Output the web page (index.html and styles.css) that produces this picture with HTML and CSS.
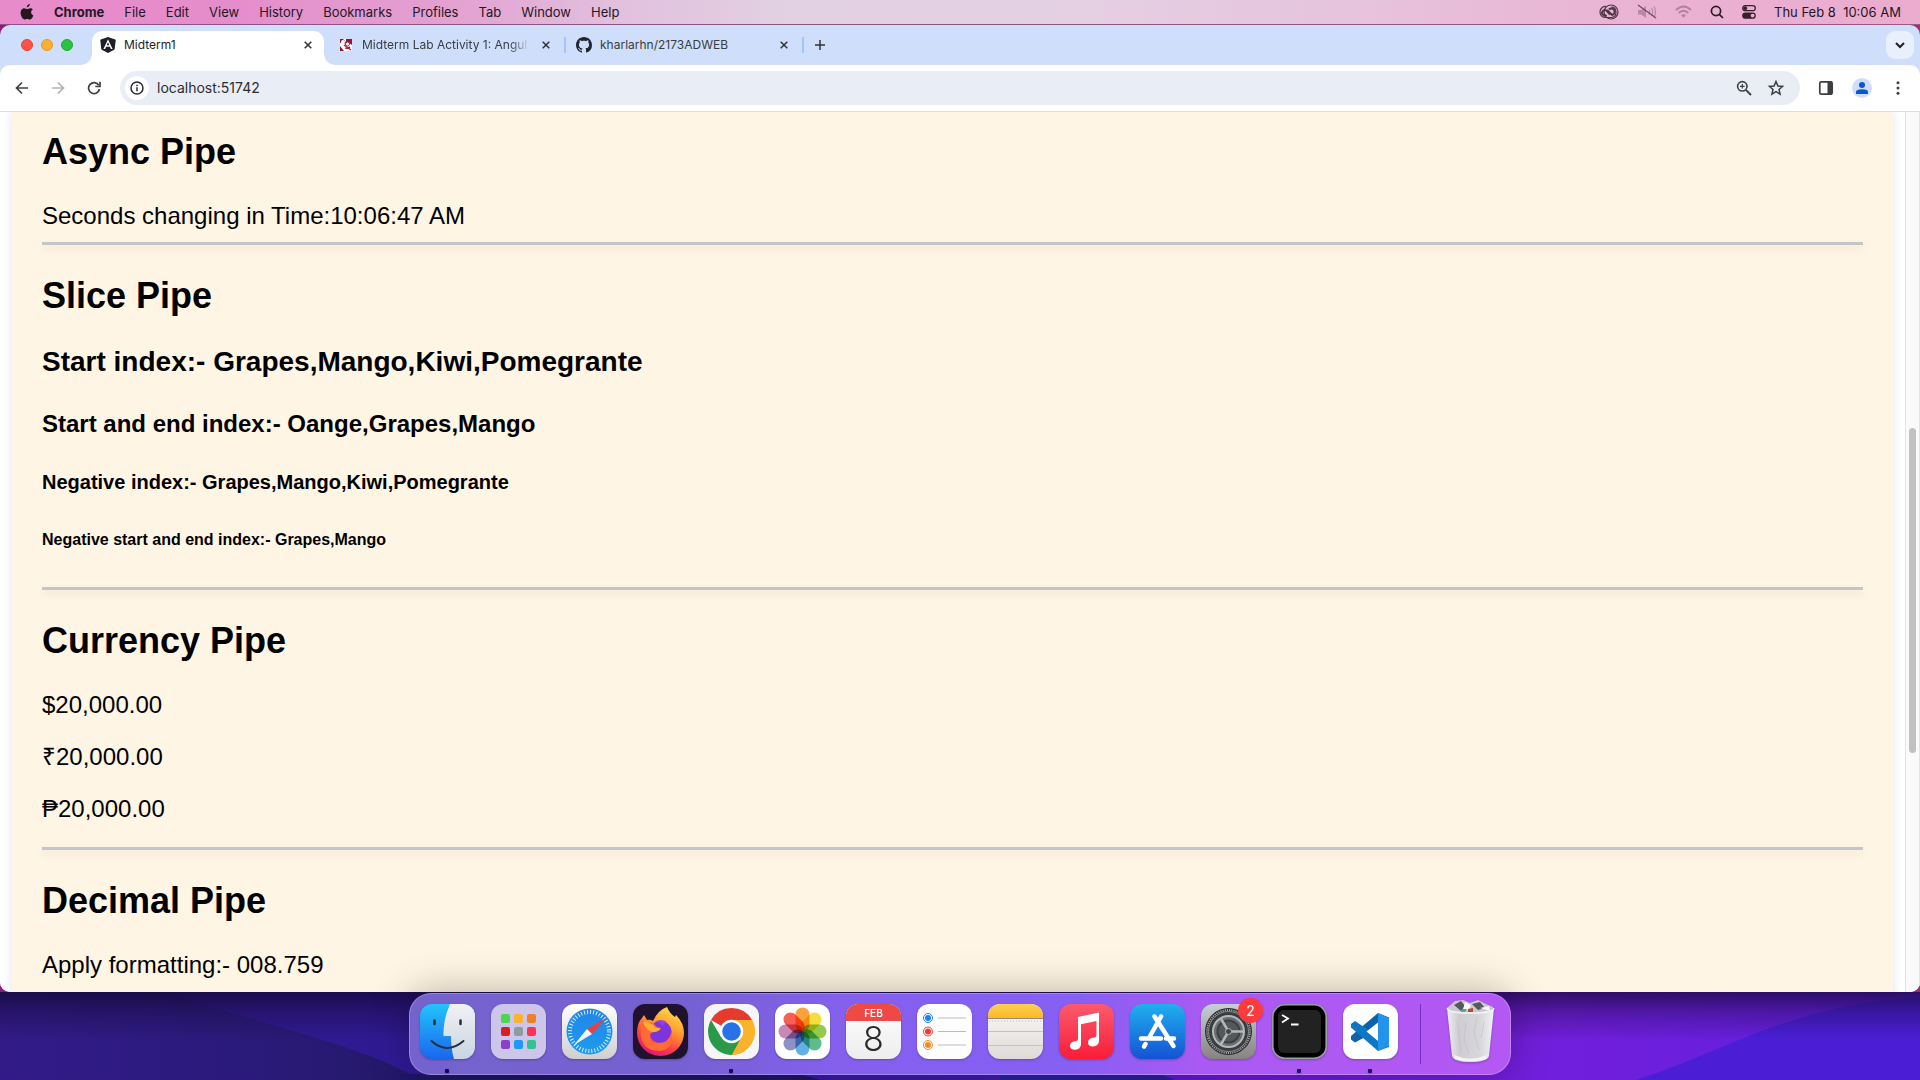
FILE: index.html
```html
<!DOCTYPE html>
<html lang="en">
<head>
<meta charset="utf-8">
<title>Midterm1</title>
<link rel="stylesheet" href="styles.css">
</head>
<body>
<div class="desktop">
  <svg class="wallpaper" viewBox="0 0 1920 88" preserveAspectRatio="none" aria-hidden="true">
    <defs>
      <linearGradient id="wall" x1="0" x2="1" y1="0" y2="0">
        <stop offset="0" stop-color="#321b88"/><stop offset=".2" stop-color="#301a94"/><stop offset=".5" stop-color="#3d19b0"/><stop offset=".65" stop-color="#6a1ad2"/><stop offset=".8" stop-color="#721fdc"/><stop offset="1" stop-color="#601fdc"/>
      </linearGradient>
      <linearGradient id="wave" x1="0" x2="1" y1="0" y2="0">
        <stop offset="0" stop-color="#281a70" stop-opacity="0"/><stop offset=".6" stop-color="#281a70" stop-opacity=".7"/><stop offset="1" stop-color="#221866"/>
      </linearGradient>
    </defs>
    <rect width="1920" height="88" fill="url(#wall)"/>
    <path d="M0 88V0H170C250 32 360 50 420 88Z" fill="url(#wave)"/>
    <path d="M400 88V82H800L820 88Z" fill="#1d1768"/>
    <path d="M1636 88C1730 58 1790 12 1920 6V88Z" fill="#4b1ed6"/>
    <path d="M1000 88V82H1160L1175 88Z" fill="#2b1fa2"/>
  </svg>

  <header class="menubar">
    <nav class="menus" aria-label="Menu bar">
      <button class="menu apple" aria-label="Apple menu"><svg width="14" height="16" viewBox="0 0 14 16"><path d="M9.800 0C9.900 1.600 8.400 3.400 6.800 3.300C6.700 1.700 8.200 .2 9.800 0ZM12.900 5.400C11.700 6.100 11.100 7 11.100 8.300C11.100 9.800 12 10.900 13.300 11.400C12.700 13.200 11.300 15.500 9.900 15.500C8.900 15.500 8.500 14.900 7.200 14.900C6 14.900 5.500 15.500 4.600 15.500C2.700 15.500 .6 11.900 .6 8.800C.6 5.900 2.400 4.300 4.200 4.300C5.400 4.300 6.300 5.100 7.100 5.100C7.800 5.100 8.900 4.200 10.300 4.200C11.300 4.200 12.300 4.700 12.900 5.400Z" fill="#24171f"/></svg></button>
      <button class="menu menu-app">Chrome</button>
      <button class="menu">File</button>
      <button class="menu">Edit</button>
      <button class="menu">View</button>
      <button class="menu">History</button>
      <button class="menu">Bookmarks</button>
      <button class="menu">Profiles</button>
      <button class="menu">Tab</button>
      <button class="menu">Window</button>
      <button class="menu">Help</button>
    </nav>
    <div class="status">
      <svg width="20" height="16" viewBox="0 0 20 16" fill="none" stroke="#4e3545"><circle cx="12" cy="8" r="7" stroke-width="1.200"/><path d="M7 2.500A5.500 5.500 0 0 0 6 13.500H13A5.500 5.500 0 0 0 12.500 2.800" stroke-width="1.200"/><path d="M11 10.500L8 7.200A2.700 2.700 0 1 0 7.500 11M8 6L13 11A3.300 3.300 0 1 0 10 5.500" stroke-width="2"/></svg>
      <svg width="20" height="16" viewBox="0 0 20 16" fill="none"><path d="M1 6H4L9 2V14L4 10.500H1Z" fill="#b988a8"/><path d="M12 5.500Q13.500 8 12 10.500M14.500 4Q17 8 14.500 12M17 2.500Q20 8 17 13.500" stroke="#b988a8" stroke-width="1.200"/><path d="M1 1L19 14" stroke="#6d4960" stroke-width="1.200"/></svg>
      <svg width="17" height="14" viewBox="0 0 17 14" fill="none" stroke="#b081a0" stroke-width="2"><path d="M1 5Q8.500-2 16 5M3.700 8Q8.500 3.500 13.300 8"/><path d="M6.200 10.200Q8.500 8.500 10.800 10.200L8.500 12.800Z" fill="#b081a0" stroke="none"/></svg>
      <svg width="14" height="14" viewBox="0 0 14 14" fill="none" stroke="#2b1a24" stroke-width="1.700"><circle cx="6" cy="6" r="4.600"/><path d="M9.300 9.300L13 13"/></svg>
      <svg width="14" height="14" viewBox="0 0 14 14" fill="none" stroke="#36212d"><rect x=".7" y=".7" width="12.600" height="5" rx="2.500" stroke-width="1.300"/><circle cx="3.300" cy="3.200" r="1.500" fill="#36212d"/><rect x=".2" y="7.500" width="13.600" height="6.300" rx="3.100" fill="#36212d" stroke="none"/><circle cx="10.600" cy="10.600" r="1.900" fill="#eab0d0" stroke="none"/></svg>
      <time class="clock">Thu Feb 8&nbsp; 10:06 AM</time>
    </div>
  </header>

  <main class="window">
    <div class="tabstrip">
      <div class="lights">
        <button class="light light-close" aria-label="Close window"></button>
        <button class="light light-min" aria-label="Minimise window"></button>
        <button class="light light-zoom" aria-label="Zoom window"></button>
      </div>
      <div class="tab tab-active">
        <svg class="favicon" viewBox="0 0 16 16"><path d="M8 0L15.800 2.700L14.600 12.500L8 16L1.400 12.500L.2 2.700Z" fill="#1b1f27"/><path d="M8 2.200L3.400 12H5.200L6.100 9.700H9.900L10.800 12H12.600ZM8 5.300L9.300 8.300H6.700Z" fill="#fff"/></svg>
        <a class="tab-title" href="#midterm">Midterm1</a>
        <button class="tab-close" aria-label="Close tab"><svg width="8" height="8" viewBox="0 0 8 8"><path d="M.7.7L7.300 7.300M7.300.7L.7 7.300"/></svg></button>
      </div>
      <div class="tab">
        <svg class="favicon" viewBox="0 0 16 16"><rect x="2" y="2" width="12" height="12" fill="#fff"/><path d="M2 2H5L8 5V2H14V8L11 6L8 8L5 5L2 6Z" fill="#8d1735"/><path d="M2 9L6 14H2Z" fill="#8d1735"/><circle cx="5" cy="5" r="2" fill="#fff"/><circle cx="9.500" cy="7" r="2" fill="#fff" stroke="#a1344f"/><path d="M6 8L13 13M12 10Q10 12 7 11" stroke="#a02040" stroke-width="1.300" fill="none"/></svg>
        <a class="tab-title tab-title-fade" href="#activity">Midterm Lab Activity 1: Angul</a>
        <button class="tab-close" aria-label="Close tab"><svg width="8" height="8" viewBox="0 0 8 8"><path d="M.7.7L7.300 7.300M7.300.7L.7 7.300"/></svg></button>
      </div>
      <div class="tab">
        <svg class="favicon" viewBox="0 0 16 16"><path fill="#20262e" d="M8 0C3.580 0 0 3.580 0 8c0 3.540 2.290 6.530 5.470 7.590.4.070.55-.17.55-.38 0-.19-.01-.82-.01-1.490-2.010.37-2.530-.49-2.690-.94-.09-.23-.48-.94-.82-1.130-.28-.15-.68-.52-.01-.53.630-.01 1.080.58 1.230.82.720 1.210 1.870.87 2.330.66.070-.52.280-.87.510-1.070-1.780-.2-3.640-.89-3.640-3.950 0-.87.310-1.590.82-2.150-.08-.2-.36-1.020.08-2.120 0 0 .67-.21 2.200.82.640-.18 1.320-.27 2-.27s1.360.09 2 .27c1.530-1.040 2.200-.82 2.200-.82.440 1.100.16 1.920.08 2.120.51.560.82 1.270.82 2.150 0 3.070-1.870 3.750-3.650 3.950.29.25.54.73.54 1.480 0 1.070-.01 1.930-.01 2.200 0 .21.150.46.550.38A8 8 0 0 0 16 8c0-4.420-3.580-8-8-8"/></svg>
        <a class="tab-title" href="#repo">kharlarhn/2173ADWEB</a>
        <button class="tab-close" aria-label="Close tab"><svg width="8" height="8" viewBox="0 0 8 8"><path d="M.7.7L7.300 7.300M7.300.7L.7 7.300"/></svg></button>
      </div>
      <button class="new-tab" aria-label="New tab"><svg width="10" height="10" viewBox="0 0 10 10"><path d="M5 0V10M0 5H10" stroke="#333" stroke-width="1.500"/></svg></button>
      <button class="tab-search" aria-label="Search tabs"><svg width="10" height="7" viewBox="0 0 10 7"><path d="M1 1L5 5L9 1" fill="none" stroke="#1f2023" stroke-width="2"/></svg></button>
    </div>

    <div class="toolbar">
      <button class="tool" aria-label="Back"><svg width="14" height="14" viewBox="0 0 14 14" fill="none" stroke="#3c4043" stroke-width="1.700"><path d="M13 7H2M7 1.500L1.500 7L7 12.500"/></svg></button>
      <button class="tool" aria-label="Forward"><svg width="14" height="14" viewBox="0 0 14 14" fill="none" stroke="#b3b3b5" stroke-width="1.700"><path d="M1 7H12M7 1.500L12.500 7L7 12.500"/></svg></button>
      <button class="tool" aria-label="Reload"><svg width="14" height="14" viewBox="0 0 14 14" fill="none" stroke="#3c4043" stroke-width="1.700"><path d="M11.800 4.200A5.500 5.500 0 1 0 12.500 8"/><path d="M13 .8V5.500H8.300" /></svg></button>
      <form class="omnibox">
        <button type="button" class="site-info" aria-label="Site information"><svg width="14" height="14" viewBox="0 0 14 14" fill="none" stroke="#2b2d30" stroke-width="1.500"><circle cx="7" cy="7" r="6"/><path d="M7 6.300V10.200M7 3.700V5.200"/></svg></button>
        <input class="url" type="text" value="localhost:51742" aria-label="Address">
        <button type="button" class="tool" aria-label="Zoom level"><svg width="16" height="16" viewBox="0 0 16 16" fill="none" stroke="#3c4043"><circle cx="6.300" cy="6.300" r="4.700" stroke-width="1.600"/><path d="M9.800 9.800L15 15" stroke-width="1.900"/><path d="M6.300 4V8.600M4 6.300H8.600" stroke-width="1.200"/></svg></button>
        <button type="button" class="tool" aria-label="Bookmark this tab"><svg width="18" height="18" viewBox="0 0 18 18" fill="none" stroke="#3c4043" stroke-width="1.500"><path d="M9 2.500L10.900 7L15.600 7.400L12 10.500L13.100 15.200L9 12.700L4.900 15.200L6 10.500L2.400 7.400L7.100 7Z"/></svg></button>
      </form>
      <button class="tool" aria-label="Side panel"><svg width="16" height="16" viewBox="0 0 16 16"><rect x="1.800" y="1.800" width="12.400" height="12.400" rx="1.500" fill="none" stroke="#3c4043" stroke-width="1.700"/><path d="M9.500 1.500H14V14.500H9.500Z" fill="#3c4043"/></svg></button>
      <button class="tool" aria-label="Profile"><svg width="20" height="20" viewBox="0 0 20 20"><circle cx="10" cy="10" r="10" fill="#cfdffb"/><circle cx="10" cy="7" r="3" fill="#0b57d0"/><path d="M4 16V14Q4 11.300 10 11.300T16 14V16Z" fill="#0b57d0"/></svg></button>
      <button class="tool" aria-label="Menu"><svg width="4" height="14" viewBox="0 0 4 14" fill="#3c4043"><circle cx="2" cy="1.700" r="1.500"/><circle cx="2" cy="7" r="1.500"/><circle cx="2" cy="12.300" r="1.500"/></svg></button>
    </div>

    <div class="viewport">
      <div class="page">
        <article class="card">
          <h2>Async Pipe</h2>
          <div>Seconds changing in Time:10:06:47 AM</div>
          <hr>
          <h2>Slice Pipe</h2>
          <h3>Start index:- Grapes,Mango,Kiwi,Pomegrante</h3>
          <h4>Start and end index:- Oange,Grapes,Mango</h4>
          <h5>Negative index:- Grapes,Mango,Kiwi,Pomegrante</h5>
          <h6>Negative start and end index:- Grapes,Mango</h6>
          <hr>
          <h2>Currency Pipe</h2>
          <p>$20,000.00</p>
          <p>₹20,000.00</p>
          <p>₱20,000.00</p>
          <hr>
          <h2>Decimal Pipe</h2>
          <p>Apply formatting:- 008.759</p>
        </article>
      </div>
      <div class="scrollbar"><div class="thumb"></div></div>
    </div>
  </main>

  <footer class="dock-area">
    <nav class="dock" aria-label="Dock">
      <a class="app running" href="#finder" aria-label="Finder"><svg viewBox="0 0 55 55"><defs><linearGradient id="fb" x2="0" y2="1"><stop stop-color="#22c4fb"/><stop offset="1" stop-color="#1a66ee"/></linearGradient><linearGradient id="fw" x2="0" y2="1"><stop stop-color="#f1f1f4"/><stop offset="1" stop-color="#c9d5e2"/></linearGradient><clipPath id="sq"><rect width="55" height="55" rx="12"/></clipPath></defs><g clip-path="url(#sq)"><rect width="55" height="55" fill="url(#fb)"/><path d="M30 0Q23 16 23.500 32H31Q31 45 34 55H55V0Z" fill="url(#fw)"/></g><path d="M14.500 16.500V20M40.500 16.500V20" stroke="#20303e" stroke-width="2.500" stroke-linecap="round"/><path d="M11.500 37Q27 51 43.500 37" stroke="#25313c" stroke-width="2" fill="none" stroke-linecap="round"/></svg></a>
      <a class="app" href="#launchpad" aria-label="Launchpad"><svg viewBox="0 0 55 55"><rect width="55" height="55" rx="12" fill="#cdc6ea"/><rect x="10" y="10" width="9" height="9" rx="2" fill="#4bd84c"/><rect x="23" y="10" width="9" height="9" rx="2" fill="#fbb32b"/><rect x="36" y="10" width="9" height="9" rx="2" fill="#f08022"/><rect x="10" y="23" width="9" height="9" rx="2" fill="#d91d25"/><rect x="23" y="23" width="9" height="9" rx="2" fill="#8d9c9f"/><rect x="36" y="23" width="9" height="9" rx="2" fill="#fb3254"/><rect x="10" y="36" width="9" height="9" rx="2" fill="#8c3fc8"/><rect x="23" y="36" width="9" height="9" rx="2" fill="#1a9bf5"/><rect x="36" y="36" width="9" height="9" rx="2" fill="#2fc48f"/></svg></a>
      <a class="app" href="#safari" aria-label="Safari"><svg viewBox="0 0 55 55"><defs><linearGradient id="sw" x2="0" y2="1"><stop stop-color="#fff"/><stop offset="1" stop-color="#cfcfd2"/></linearGradient><linearGradient id="sb" x2="0" y2="1"><stop stop-color="#2385e6"/><stop offset="1" stop-color="#1d9bef"/></linearGradient></defs><rect width="55" height="55" rx="12" fill="url(#sw)"/><circle cx="27.500" cy="27.500" r="23" fill="url(#sb)"/><circle cx="27.500" cy="27.500" r="19.500" fill="none" stroke="#d9efff" stroke-width="4" stroke-dasharray="1 2.063"/><path d="M44 14L30 30L25 25Z" fill="#f13c3c"/><path d="M12 41L25 25L30 30Z" fill="#f4f4f6"/></svg></a>
      <a class="app" href="#firefox" aria-label="Firefox"><svg viewBox="0 0 55 55"><defs><linearGradient id="ff" x1=".8" y1="0" x2=".3" y2="1"><stop stop-color="#ffe54b"/><stop offset=".4" stop-color="#ff9a2e"/><stop offset=".72" stop-color="#ff3f46"/><stop offset="1" stop-color="#e01274"/></linearGradient></defs><rect width="55" height="55" rx="12" fill="#20122f"/><path d="M34 3Q37 10 42 13L43 11Q51 19 51 29A23.500 23 0 0 1 4 29Q4 19 9 14L11 11L14 16Q17 15 20 17Q25 6 34 3Z" fill="url(#ff)"/><circle cx="27.500" cy="28" r="11" fill="#7a35df"/><path d="M22 18Q27 14 34 18Q31 18 30 22Q25 17 22 18Z" fill="#9b3ee8"/><path d="M9 16L14 18Q19 17 22 21Q24 24 28 24Q26 28 22 28Q18 28 17 31Q16 38 25 39Q36 39 38 29Q42 38 34 45Q22 50 12 42Q5 32 9 16Z" fill="#ff6a35"/><path d="M10 18Q15 16 20 21Q23 25 28 24Q25 28 20 28Q13 27 10 18Z" fill="#ffae35"/></svg></a>
      <a class="app running" href="#chrome" aria-label="Chrome"><svg viewBox="0 0 55 55"><rect width="55" height="55" rx="12" fill="#f6f5fa"/><path d="M27.500 27.500L7 16A23.600 23.600 0 0 1 48 16Z" fill="#e33b2e"/><path d="M27.500 27.500L48 16A23.600 23.600 0 0 1 28 51Z" fill="#fbb32c"/><path d="M7 16A23.600 23.600 0 0 0 28 51L37.500 33L17 33Z" fill="#2a9a48"/><path d="M27.500 16H48A23.600 23.600 0 0 1 28 51L38 33Z" fill="#fbb32c"/><circle cx="27.500" cy="27.500" r="11.700" fill="#fff"/><circle cx="27.500" cy="27.500" r="9.300" fill="#2672e6"/></svg></a>
      <a class="app" href="#photos" aria-label="Photos"><svg viewBox="0 0 55 55"><rect width="55" height="55" rx="12" fill="#fff"/><g class="petals"><rect x="20.500" y="3.500" width="14" height="24" rx="7" fill="#fb9a2b"/><rect x="20.500" y="3.500" width="14" height="24" rx="7" fill="#f3da2c" transform="rotate(45 27.500 27.500)"/><rect x="20.500" y="3.500" width="14" height="24" rx="7" fill="#8dc63c" transform="rotate(90 27.500 27.500)"/><rect x="20.500" y="3.500" width="14" height="24" rx="7" fill="#50b782" transform="rotate(135 27.500 27.500)"/><rect x="20.500" y="3.500" width="14" height="24" rx="7" fill="#56a9e2" transform="rotate(180 27.500 27.500)"/><rect x="20.500" y="3.500" width="14" height="24" rx="7" fill="#8488c0" transform="rotate(225 27.500 27.500)"/><rect x="20.500" y="3.500" width="14" height="24" rx="7" fill="#c27fb0" transform="rotate(270 27.500 27.500)"/><rect x="20.500" y="3.500" width="14" height="24" rx="7" fill="#fb5048" transform="rotate(315 27.500 27.500)"/></g></svg></a>
      <a class="app" href="#calendar" aria-label="Calendar"><span class="cal"><span class="cal-month">FEB</span><span class="cal-day">8</span></span></a>
      <a class="app" href="#reminders" aria-label="Reminders"><svg viewBox="0 0 55 55"><rect width="55" height="55" rx="12" fill="#fdfdfd"/><g fill="#fff" stroke-width="1"><circle cx="11" cy="14" r="4.500" stroke="#1a82f7"/><circle cx="11" cy="27.500" r="4.500" stroke="#f03a36"/><circle cx="11" cy="41" r="4.500" stroke="#f28b23"/></g><circle cx="11" cy="14" r="3" fill="#1a82f7"/><circle cx="11" cy="27.500" r="3" fill="#f03a36"/><circle cx="11" cy="41" r="3" fill="#f28b23"/><path d="M21 14H49M21 27.500H49M21 41H49" stroke="#bcbcc0"/></svg></a>
      <a class="app" href="#notes" aria-label="Notes"><svg viewBox="0 0 55 55"><defs><linearGradient id="np" x2="0" y2="1"><stop stop-color="#fbfaf9"/><stop offset="1" stop-color="#dedad7"/></linearGradient><linearGradient id="ny" x2="0" y2="1"><stop stop-color="#fdd04e"/><stop offset="1" stop-color="#fdb927"/></linearGradient></defs><g clip-path="url(#sq)"><rect width="55" height="55" fill="url(#np)"/><rect width="55" height="14" fill="url(#ny)"/><path d="M0 14.500H55" stroke="#948b7f"/><path d="M1 17H55" stroke="#bcb8b4" stroke-width="1" stroke-dasharray="1 2"/><path d="M0 27.500H55M0 41.500H55" stroke="#c6c2be"/></g></svg></a>
      <a class="app" href="#music" aria-label="Music"><svg viewBox="0 0 55 55"><defs><linearGradient id="mu" x2="0" y2="1"><stop stop-color="#fb5a6e"/><stop offset="1" stop-color="#f91d38"/></linearGradient></defs><rect width="55" height="55" rx="12" fill="url(#mu)"/><path d="M19 13L40 8.500V36.500Q40 42 34 42.500Q29 42.500 29 38.500Q29 34.500 34 33.800Q37.500 33.500 37.500 31V17L22 20.300V40Q22 45.500 16 45.800Q11 45.800 11 41.700Q11 38 16 37.300Q19 36.900 19 34.500Z" fill="#fff"/></svg></a>
      <a class="app" href="#appstore" aria-label="App Store"><svg viewBox="0 0 55 55"><defs><linearGradient id="as" x2="0" y2="1"><stop stop-color="#1fb0ee"/><stop offset="1" stop-color="#1552d4"/></linearGradient></defs><rect width="55" height="55" rx="12" fill="url(#as)"/><path d="M31 12.500L19 34M24.500 12.500L43.500 42M11 34.500H31M36 34.500H44M15.500 40L14 42.500" stroke="#fff" stroke-width="4.500" stroke-linecap="round"/></svg></a>
      <a class="app" href="#settings" aria-label="System Settings, 2 notifications"><svg viewBox="0 0 55 55"><defs><linearGradient id="se" x2="0" y2="1"><stop stop-color="#c7ced6"/><stop offset="1" stop-color="#87837f"/></linearGradient></defs><rect width="55" height="55" rx="12" fill="url(#se)"/><circle cx="27.500" cy="27.500" r="23.500" fill="#2b2d2f"/><circle cx="27.500" cy="27.500" r="21.500" fill="none" stroke="#a4a7a9" stroke-width="1.800" stroke-dasharray="1.200 1"/><circle cx="27.500" cy="27.500" r="20" fill="#3a3d3f" stroke="#8c8f91"/><circle cx="27.500" cy="27.500" r="15.500" fill="#6b6e70" stroke="#b5b8ba" stroke-width="2"/><circle cx="27.500" cy="27.500" r="11" fill="#55585a" stroke="#3d4042" stroke-width="2"/><g stroke="#b3b6b8" stroke-width="2.500"><path d="M27.500 27.500H43M27.500 27.500L19.500 14M27.500 27.500L19.500 41"/></g><circle cx="27.500" cy="27.500" r="3" fill="#444" stroke="#b3b6b8"/></svg><span class="badge">2</span></a>
      <a class="app running" href="#terminal" aria-label="Terminal"><svg viewBox="0 0 55 55"><rect x=".8" y=".8" width="53.400" height="53.400" rx="12" fill="#000" stroke="#98a09f" stroke-width="1.600"/><rect x="6" y="6" width="43" height="43" rx="6" fill="#222"/><path d="M10 11L16 14.500L10 18.500M19 20.500H26.500" fill="none" stroke="#fff" stroke-width="1.800"/></svg></a>
      <a class="app running" href="#vscode" aria-label="Visual Studio Code"><svg viewBox="0 0 55 55"><rect width="55" height="55" rx="12" fill="#fff"/><path d="M35 9L46 13.500V20L12 38.500L8 35.500V32L35 9Z" fill="#0a62a8"/><path d="M8 20L12 17L46 40V43L35 47L8 23.500Z" fill="#0d77c4"/><path d="M35 18.500V37L23.500 27.500Z" fill="#fff"/><path d="M35 9L46 14V42L35 47Z" fill="#2394ec"/></svg></a>
      <span class="dock-sep"></span>
      <a class="app" href="#trash" aria-label="Trash"><svg viewBox="0 0 55 55" overflow="visible"><defs><linearGradient id="tr"><stop stop-color="#eeeef0"/><stop offset=".25" stop-color="#cfcdd3"/><stop offset=".7" stop-color="#d8d7db"/><stop offset="1" stop-color="#f1f1f3"/></linearGradient></defs><path d="M4 4L12-3L20-4L27-1L35-4L43 0L50 3L48 10H6Z" fill="#c7cacc"/><path d="M11 1L18-3L22 2L18 7ZM29 0L37-2L42 4L35 6Z" fill="#55595d"/><path d="M22-2L28 1L26 6H20ZM37 4L46 2L47 7Z" fill="#f7f7f7"/><path d="M19 5H24L22 8H18Z" fill="#33b2a5"/><path d="M25 5L30 4V8H25Z" fill="#b44a3b"/><path d="M4 4Q5 9 27 9Q50 9 51 4L46 52Q44 58 27 58Q11 58 9 52Z" fill="url(#tr)"/><path d="M11 51Q27 58 44 51L43 55Q27 60 12 55Z" fill="#f3f3f5"/><path d="M4 4Q5 9 27 9Q50 9 51 4" fill="none" stroke="#f5f5f6" stroke-width="1.300"/><path d="M14 16L18 48M23 18L21 35L26 50M34 13L31 28L36 46M41 18L38 34" stroke="#bebcc2" fill="none" opacity=".6"/></svg></a>
    </nav>
  </footer>
</div>
</body>
</html>
```
FILE: styles.css
```css
* { box-sizing: border-box; }

body {
  margin: 0;
  font-family: Inter, "Liberation Sans", sans-serif;
}

button {
  border: 0;
  padding: 0;
  margin: 0;
  background: none;
  color: inherit;
  font: inherit;
}

svg { display: block; flex: none; }

a { color: inherit; text-decoration: none; }

.desktop {
  position: relative;
  display: flex;
  flex-direction: column;
  height: 100vh;
  overflow: hidden;
  background: linear-gradient(90deg, #8f1b7c, #6a3560 50%, #a23070);
}

.wallpaper {
  position: absolute;
  left: 0;
  bottom: 0;
  width: 100%;
  height: 88px;
}

/* Menu bar */
.menubar {
  display: flex;
  justify-content: space-between;
  align-items: center;
  height: 24px;
  flex: none;
  margin-bottom: 1px;
  padding: 0 19px 1px 20px;
  background: linear-gradient(90deg, #e88bca 0, #e58dcb 12%, #e3a2d2 24%, #e1c0de 32%, #e1cfe2 40%, #e4d0e3 55%, #e6c4de 70%, #eab2d3 86%, #ebabce 100%);
  box-shadow: 0 1px rgba(150, 130, 150, .5);
  color: #24171f;
  font-size: 13px;
}

.menus { display: flex; align-items: center; gap: 20px; }
.menu-app { font-weight: 700; }
.status { display: flex; align-items: center; gap: 18px; }
.clock { white-space: nowrap; }

/* Browser window */
.window {
  position: relative;
  display: flex;
  flex-direction: column;
  flex: 1;
  min-height: 0;
  border-radius: 10px;
  overflow: hidden;
  background: #cfdffb;
}

.tabstrip {
  display: flex;
  align-items: center;
  gap: 6px;
  height: 40px;
  flex: none;
  padding: 0 6px 0 21px;
  font-size: 12px;
  color: #3a3c40;
}

.lights { display: flex; gap: 8px; margin-right: 13px; }
.light { width: 12px; height: 12px; border-radius: 50%; }
.light-close { background: #fe5148; border: 1px solid #e2453d; }
.light-min { background: #fdb02f; border: 1px solid #e09a26; }
.light-zoom { background: #2ac23e; border: 1px solid #22a834; }

.tab {
  position: relative;
  display: flex;
  align-items: center;
  gap: 8px;
  width: 232px;
  height: 28px;
  padding: 0 8px;
}

.tab:not(.tab-active)::after {
  content: "";
  position: absolute;
  right: -4px;
  top: 6px;
  width: 2px;
  height: 16px;
  background: #a4c5fa;
}

.tab-active {
  height: 34px;
  align-self: flex-end;
  padding-bottom: 6px;
  border-radius: 10px 10px 0 0;
  background: #fff;
  color: #1f2023;
}

.tab-active::before,
.tab-active::after {
  content: "";
  position: absolute;
  bottom: 0;
  width: 10px;
  height: 10px;
}

.tab-active::before { left: -10px; background: radial-gradient(circle at 0 0, transparent 9px, #fff 10px); }
.tab-active::after { right: -10px; background: radial-gradient(circle at 100% 0, transparent 9px, #fff 10px); }

.favicon { width: 16px; height: 16px; }
.tab-title { flex: 1; padding-bottom: 2px; overflow: hidden; white-space: nowrap; }
.tab-title-fade { -webkit-mask-image: linear-gradient(90deg, #000 88%, transparent); mask-image: linear-gradient(90deg, #000 88%, transparent); }
.tab-close { display: grid; place-items: center; width: 16px; height: 16px; }
.tab-close path { stroke: #303236; stroke-width: 1.5; }

.new-tab { display: grid; place-items: center; width: 28px; height: 28px; }

.tab-search {
  display: grid;
  place-items: center;
  width: 28px;
  height: 28px;
  margin-left: auto;
  border-radius: 9px;
  background: #e8f0fd;
}

.toolbar {
  display: flex;
  align-items: center;
  gap: 8px;
  height: 47px;
  flex: none;
  padding: 0 8px;
  border-bottom: 1px solid #dcdde0;
  border-radius: 10px 10px 0 0;
  background: #fff;
}

.tool { display: grid; place-items: center; width: 28px; height: 28px; }

.omnibox {
  display: flex;
  align-items: center;
  gap: 4px;
  flex: 1;
  height: 34px;
  margin: 0 4px;
  padding: 0 10px 0 5px;
  border-radius: 17px;
  background: #e8edf6;
}

.site-info {
  display: grid;
  place-items: center;
  width: 24px;
  height: 24px;
  margin-right: 4px;
  border-radius: 50%;
  background: #fff;
}

.url {
  flex: 1;
  min-width: 0;
  border: 0;
  padding: 0;
  background: none;
  color: #2b2d30;
  font: 14px/20px Inter, "Liberation Sans", sans-serif;
}

/* Page shown in the browser */
.viewport {
  display: flex;
  flex: 1;
  min-height: 0;
  background: #fff;
}

.page { flex: 1; padding: 0 12px; overflow: hidden; }

.card {
  padding: 19px 30px 60px;
  background: #fff5e4;
  box-shadow: 0 0 10px rgba(20, 40, 90, .12);
  color: #000;
  font: 24px/28px "Liberation Sans", Arial, sans-serif;
}

.card h2 { margin: 30px 0; font-size: 36px; line-height: 41px; }
.card h2:first-child { margin-top: 0; }
.card h3 { margin: 28px 0; font-size: 28px; line-height: 32px; }
.card h4 { margin: 32px 0; font-size: 24px; line-height: 28px; }
.card h5 { margin: 33px 0; font-size: 20px; line-height: 23px; }
.card h6 { margin: 36px 0 38px; font-size: 16px; line-height: 19px; }
.card p { margin: 24px 0; }

.card hr {
  height: 3px;
  margin: 12px 0;
  border: 0;
  background: #c4c5c6;
  box-shadow: 0 4px 8px rgba(0, 0, 0, .1);
}

.scrollbar {
  width: 15px;
  padding: 316px 3px 0;
  border: solid #e4e4e4;
  border-width: 0 1px;
  background: #fafafa;
}

.thumb { height: 325px; border-radius: 4px; background: #c1c1c1; }

/* Dock */
.dock-area {
  position: relative;
  display: flex;
  justify-content: center;
  align-items: flex-start;
  height: 88px;
  flex: none;
  padding-top: 1px;
  background: linear-gradient(180deg, rgba(15, 5, 40, .65) 0, rgba(15, 5, 40, .3) 20px, transparent 48px);
}

.dock {
  display: flex;
  gap: 16px;
  height: 82px;
  padding: 10px 12px 10px 10px;
  border: 1px solid rgba(255, 255, 255, .25);
  border-radius: 22px;
  background: linear-gradient(97deg, #7563cc 0, #7561d2 25%, #8560ee 40%, #865ff4 60%, #a95af2 72%, #b458f4 100%);
  background-origin: border-box;
  box-shadow: 0 0 40px rgba(0, 0, 0, .3);
}

.app {
  position: relative;
  width: 55px;
  height: 55px;
  border-radius: 12px;
  filter: drop-shadow(0 1px 1px rgba(0, 0, 0, .25));
}

.running::after {
  content: "";
  position: absolute;
  left: 25px;
  top: 65px;
  width: 4px;
  height: 4px;
  border-radius: 1px;
  background: #19005e;
}

.petals rect { mix-blend-mode: multiply; opacity: .92; }

.cal {
  display: flex;
  flex-direction: column;
  height: 55px;
  border-radius: 12px;
  overflow: hidden;
  background: linear-gradient(#fff, #ededed);
  text-align: center;
}

.cal-month {
  height: 17px;
  background: #ee4a45;
  color: #fff;
  font-size: 10px;
  font-weight: 600;
  line-height: 19px;
}

.cal-day { color: #2b2b2b; font-size: 34px; font-weight: 300; line-height: 35px; }

.badge {
  position: absolute;
  right: -7px;
  top: -6px;
  width: 25px;
  height: 25px;
  border-radius: 50%;
  background: #fb3b3d;
  color: #fff;
  font-size: 14px;
  line-height: 25px;
  text-align: center;
}

.dock-sep { width: 1px; height: 60px; margin: 0 6px; background: #7a2cc0; }
```
